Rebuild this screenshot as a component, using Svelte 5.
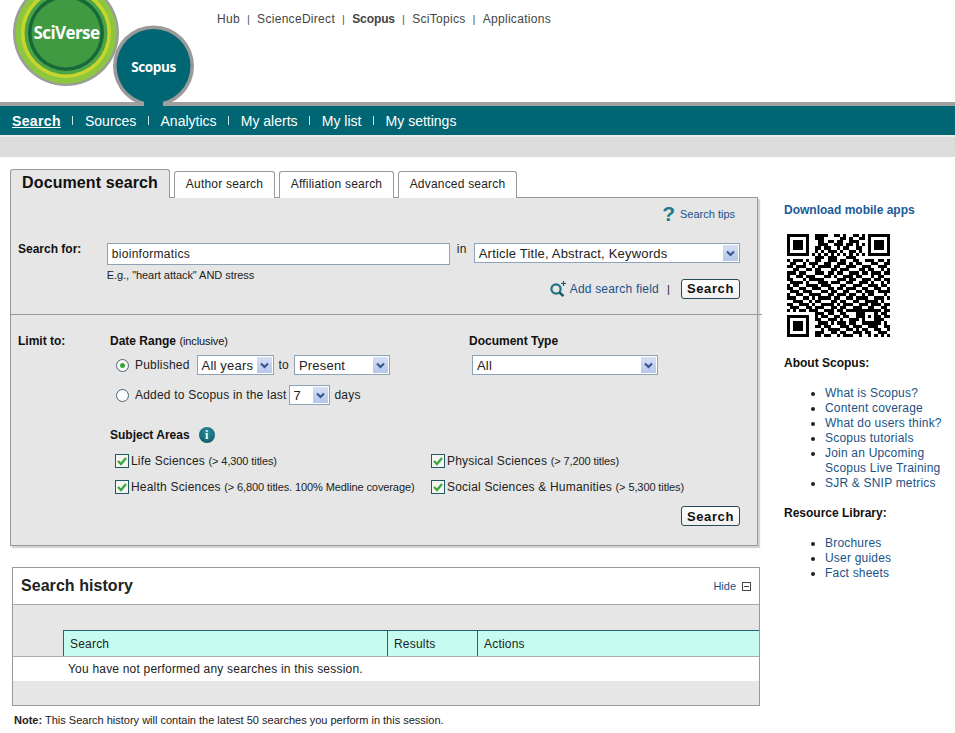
<script>
  const topLinks = ["Hub", "ScienceDirect", "Scopus", "SciTopics", "Applications"];
  const navLinks = ["Search", "Sources", "Analytics", "My alerts", "My list", "My settings"];
  const tabs = ["Author search", "Affiliation search", "Advanced search"];
  const aboutLinks = [
    "What is Scopus?",
    "Content coverage",
    "What do users think?",
    "Scopus tutorials",
    "Join an Upcoming Scopus Live Training",
    "SJR & SNIP metrics"
  ];
  const resourceLinks = ["Brochures", "User guides", "Fact sheets"];

  // QR code: finder and alignment squares are added by code below
  const qrRows = [
    "000000000111100110100110100000000",
    "000000000111000001101001100000000",
    "000000000011011011001110000000000",
    "000000000011100111011010100000000",
    "000000000110110010110011000000000",
    "000000000101011101001101000000000",
    "000000001010101010101010100000000",
    "000000000111011100011100000000000",
    "101110100110011101100110011101101",
    "011001011100110011101011000110011",
    "110111001011110110011100111001110",
    "001100110110001101110001101100101",
    "111011000111011011001110110111011",
    "100110111000110100111011000101100",
    "110001011111000011101100111011011",
    "011110100011101110011001110100101",
    "101100111101110001100111001110110",
    "110011001110011011011100110011001",
    "011101110001101100110011011101111",
    "100110011110011011101100101100010",
    "111001101011110110011011110011101",
    "001110010110001101100110011110100",
    "110011101001111010111001110111011",
    "011100110111001101100111001100110",
    "101011011100111011011111100111011",
    "000000000111011001100011101100110",
    "000000000101100110110011001011011",
    "000000000110011101001110011001100",
    "000000000011101011101100111011010",
    "000000000110110001110111001110011",
    "000000000001011110011010110011001",
    "000000000111001101100111011001110",
    "000000000110110010111001001010101"
  ];

  const inFinder = (x, y, ox, oy) => {
    const dx = x - ox;
    const dy = y - oy;
    if (dx < 0 || dy < 0 || dx > 6 || dy > 6) return false;
    return dx === 0 || dy === 0 || dx === 6 || dy === 6 || (dx > 1 && dx < 5 && dy > 1 && dy < 5);
  };

  const isDark = (x, y) => {
    if (x < 8 && y < 8) return inFinder(x, y, 0, 0);
    if (x > 24 && y < 8) return inFinder(x, y, 26, 0);
    if (x < 8 && y > 24) return inFinder(x, y, 0, 26);
    const ax = Math.abs(x - 26);
    const ay = Math.abs(y - 26);
    if (ax < 3 && ay < 3) return ax === 2 || ay === 2 || (ax === 0 && ay === 0);
    return qrRows[y][x] === "1";
  };

  const qrCells = [];
  for (let y = 0; y < 33; y++) {
    for (let x = 0; x < 33; x++) {
      if (isDark(x, y)) qrCells.push({ x, y });
    }
  }
</script>

{#snippet arrow()}
  <span class="arrow">
    <svg width="9" height="7" viewBox="0 0 9 7"><path d="M1 1.5l3.5 3.5 3.5-3.5" fill="none" stroke="#33538c" stroke-width="2" /></svg>
  </span>
{/snippet}

{#snippet check(label, note)}
  <div class="check">
    <svg class="box" width="14" height="14" viewBox="0 0 14 14">
      <rect x=".5" y=".5" width="13" height="13" fill="#f4f4f0" stroke="#1f5a6a" />
      <path d="M3 7l3 3 5-6" fill="none" stroke="#3aa63a" stroke-width="2.2" />
    </svg>
    <span>{label} <small>{note}</small></span>
  </div>
{/snippet}

<header class="top">
  <svg class="logo" width="200" height="106" viewBox="0 0 200 106">
    <circle cx="66" cy="33" r="53" fill="#9a9e98" />
    <circle cx="66" cy="33" r="50.5" fill="#8dc63f" />
    <circle cx="66" cy="33" r="45" fill="#c8d62b" />
    <circle cx="66" cy="33" r="41.5" fill="#4ba546" />
    <circle cx="66" cy="33" r="38" fill="#17693a" />
    <circle cx="66" cy="33" r="34.5" fill="#3f9a41" />
    <text x="66.5" y="38.5" class="logo-a" text-anchor="middle">SciVerse</text>
    <circle cx="153.5" cy="66" r="40.5" fill="#9a9a9a" />
    <path d="M138 102h9v4h-9zM160 102h9v4h-9z" fill="#a0a0a0" />
    <circle cx="153.5" cy="66" r="37" fill="#006674" />
    <rect x="144" y="98" width="19" height="8" fill="#006674" />
    <text x="153.5" y="71.5" class="logo-b" text-anchor="middle">Scopus</text>
  </svg>
  <nav class="toplinks">
    {#each topLinks as link, i}
      {#if i > 0}<i>|</i>{/if}
      <a href="#top" class:on={link === "Scopus"}>{link}</a>
    {/each}
  </nav>
</header>

<nav class="mainnav">
  {#each navLinks as link, i}
    {#if i > 0}<i></i>{/if}
    <a href="#nav" class:on={i === 0}>{link}</a>
  {/each}
</nav>
<div class="band"></div>

<main class="page">
  <section class="left">
    <div class="tabs">
      <div class="tab active">Document search</div>
      {#each tabs as tab}
        <div class="tab">{tab}</div>
      {/each}
    </div>

    <div class="panel">
      <div class="search-part">
        <div class="tips">
          <span class="qmark">?</span>
          <a href="#tips">Search tips</a>
        </div>
        <div class="search-row">
          <b class="lbl">Search for:</b>
          <div class="field">
            <input value="bioinformatics" />
            <p>E.g., "heart attack" AND stress</p>
          </div>
          <span class="in">in</span>
          <div class="select wide"><span>Article Title, Abstract, Keywords</span>{@render arrow()}</div>
        </div>
        <div class="add-row">
          <svg width="19" height="17" viewBox="0 0 19 17">
            <circle cx="7" cy="9" r="4.6" fill="none" stroke="#1f7280" stroke-width="2.2" />
            <path d="M10.5 12.5l4 3.6" stroke="#1f5a6a" stroke-width="2.6" />
            <path d="M14.5 1v5M12 3.5h5" stroke="#1f5a6a" stroke-width="1.2" />
          </svg>
          <a href="#add">Add search field</a>
          <span class="pipe">|</span>
          <button>Search</button>
        </div>
      </div>

      <div class="limit-part">
        <b class="lbl">Limit to:</b>
        <div class="limit-body">
          <div class="dates">
            <div class="date-col">
              <div class="head"><b>Date Range</b> <small>(inclusive)</small></div>
              <div class="radio-row first">
                <span class="radio on"></span>
                <span>Published</span>
                <div class="select years"><span>All years</span>{@render arrow()}</div>
                <span>to</span>
                <div class="select present"><span>Present</span>{@render arrow()}</div>
              </div>
              <div class="radio-row">
                <span class="radio"></span>
                <span>Added to Scopus in the last</span>
                <div class="select days"><span>7</span>{@render arrow()}</div>
                <span>days</span>
              </div>
            </div>
            <div class="type-col">
              <div class="head"><b>Document Type</b></div>
              <div class="select doctype"><span>All</span>{@render arrow()}</div>
            </div>
          </div>

          <div class="head subject"><b>Subject Areas</b><span class="info">i</span></div>
          <div class="areas">
            {@render check("Life Sciences", "(> 4,300 titles)")}
            {@render check("Physical Sciences", "(> 7,200 titles)")}
            {@render check("Health Sciences", "(> 6,800 titles. 100% Medline coverage)")}
            {@render check("Social Sciences & Humanities", "(> 5,300 titles)")}
          </div>
          <div class="bottom-btn"><button>Search</button></div>
        </div>
      </div>
    </div>

    <div class="history">
      <div class="hist-head">
        <h2>Search history</h2>
        <a href="#hide">Hide</a>
        <span class="minus"></span>
      </div>
      <div class="hist-gap">
        <div class="thead">
          <span class="c1">Search</span>
          <span class="c2">Results</span>
          <span class="c3">Actions</span>
        </div>
      </div>
      <div class="hist-row">You have not performed any searches in this session.</div>
      <div class="hist-foot"></div>
    </div>
    <p class="note"><b>Note:</b> This Search history will contain the latest 50 searches you perform in this session.</p>
  </section>

  <aside class="side">
    <a class="dl" href="#apps">Download mobile apps</a>
    <svg class="qr" width="103" height="103" viewBox="0 0 33 33" shape-rendering="crispEdges">
      {#each qrCells as c}
        <rect x={c.x} y={c.y} width="1" height="1" fill="#000" />
      {/each}
    </svg>
    <b class="side-title">About Scopus:</b>
    <ul>
      {#each aboutLinks as link}
        <li><a href="#about">{link}</a></li>
      {/each}
    </ul>
    <b class="side-title">Resource Library:</b>
    <ul>
      {#each resourceLinks as link}
        <li><a href="#res">{link}</a></li>
      {/each}
    </ul>
  </aside>
</main>

<style>
  :global(body) {
    margin: 0;
    background: #fff;
    color: #222;
    font-family: "Liberation Sans", Arial, sans-serif;
    font-size: 12px;
    letter-spacing: 0.2px;
    overflow: hidden;
  }

  a {
    color: #1a5286;
    text-decoration: none;
  }

  p {
    margin: 0;
  }

  small {
    font-size: 11px;
    letter-spacing: -0.1px;
  }

  /* header */
  .top {
    position: relative;
    height: 102px;
    border-bottom: 4px solid #a0a0a0;
  }

  .logo {
    position: absolute;
    left: 0;
    top: 0;
  }

  .logo-a {
    fill: #fff;
    font: bold 17px "Open Sans", sans-serif;
    letter-spacing: -0.6px;
  }

  .logo-b {
    fill: #fff;
    font: bold 13.5px "Open Sans", sans-serif;
    letter-spacing: -0.4px;
  }

  .toplinks {
    display: flex;
    padding: 12px 0 0 217px;
    gap: 7px;
    line-height: 14px;
    letter-spacing: 0.3px;
  }

  .toplinks a {
    color: #444;
  }

  .toplinks a.on {
    font-weight: bold;
    letter-spacing: -0.1px;
  }

  .toplinks i {
    font-style: normal;
    color: #555;
    font-size: 11px;
  }

  .mainnav {
    display: flex;
    align-items: center;
    height: 29px;
    padding-left: 12px;
    background: #006674;
    font-size: 14px;
    letter-spacing: 0;
  }

  .mainnav a {
    color: #fff;
  }

  .mainnav a.on {
    font-weight: bold;
    text-decoration: underline;
    letter-spacing: 0.35px;
  }

  .mainnav i {
    width: 1px;
    height: 9px;
    margin: 0 11.6px;
    background: #cfe3e6;
  }

  .band {
    height: 20px;
    border-top: 2px solid #e8ecec;
    background: #dcdcdc;
  }

  /* page columns */
  .page {
    display: flex;
    padding: 13px 0 0 10px;
  }

  .left {
    width: 750px;
    flex: none;
  }

  .tabs {
    display: flex;
    gap: 4px;
    align-items: flex-end;
    height: 28px;
    position: relative;
    z-index: 1;
    margin-bottom: -1px;
  }

  .tab {
    display: flex;
    align-items: center;
    justify-content: center;
    height: 27px;
    padding-bottom: 2px;
    box-sizing: border-box;
    border: 1px solid #999;
    border-bottom: 0;
    border-radius: 3px 3px 0 0;
    background: #fff;
    color: #222;
    white-space: nowrap;
  }

  .tab.active {
    height: 29px;
    width: 160px;
    background: #e6e6e6;
    font-size: 16px;
    font-weight: bold;
    letter-spacing: 0.1px;
    color: #111;
  }

  .tab:nth-child(2) {
    width: 101px;
  }

  .tab:nth-child(3) {
    width: 115px;
  }

  .tab:nth-child(4) {
    width: 119px;
  }

  .panel {
    width: 748px;
    box-sizing: border-box;
    border: 1px solid #999;
    background: #e6e6e6;
    box-shadow: 2px 2px 1px #d4d4d4;
  }

  .search-part {
    height: 117px;
    box-sizing: border-box;
    padding: 7px 22px 0 7px;
    border-bottom: 1px solid #999;
    margin-right: -5px;
  }

  .tips {
    display: flex;
    justify-content: flex-end;
    align-items: center;
    height: 18px;
    gap: 5px;
    padding-right: 5px;
    font-size: 11px;
    letter-spacing: 0;
  }

  .qmark {
    color: #1f7a88;
    font-size: 21px;
    font-weight: bold;
    line-height: 18px;
  }

  .search-row {
    display: flex;
    align-items: flex-start;
    margin-top: 20px;
  }

  .lbl {
    display: block;
    color: #111;
    letter-spacing: 0;
  }

  .search-row .lbl {
    width: 89px;
    line-height: 14px;
    margin-top: -1px;
  }

  .field {
    width: 344px;
  }

  input {
    display: block;
    width: 100%;
    height: 22px;
    box-sizing: border-box;
    padding: 0 4px;
    border: 1px solid #8fa3b3;
    background: #fff;
    color: #222;
    font: 12px "Liberation Sans", Arial, sans-serif;
    letter-spacing: 0.3px;
  }

  .field p {
    font-size: 11px;
    letter-spacing: -0.05px;
    line-height: 14px;
    margin-top: 3px;
  }

  .in {
    width: 24px;
    padding-left: 7px;
    box-sizing: border-box;
    line-height: 12px;
  }

  .select {
    display: flex;
    align-items: center;
    justify-content: space-between;
    height: 20px;
    box-sizing: border-box;
    padding: 0 1px 0 4px;
    border: 1px solid #8ca3b8;
    background: #fff;
    color: #222;
    font-size: 13px;
    letter-spacing: 0.2px;
  }

  .arrow {
    display: flex;
    align-items: center;
    justify-content: center;
    width: 15px;
    height: 16px;
    background: linear-gradient(#d6e0f5, #b4c6ea);
  }

  .wide {
    width: 267px;
  }

  .add-row {
    display: flex;
    align-items: center;
    justify-content: flex-end;
    margin: -4px 0 0;
    height: 21px;
  }

  .add-row svg {
    margin-right: 2px;
  }

  .pipe {
    margin: 0 11px 0 8px;
    color: #222;
    font-size: 11px;
  }

  button {
    width: 59px;
    height: 20px;
    padding: 0;
    box-sizing: border-box;
    border: 1px solid #274a5a;
    border-radius: 3px;
    background: linear-gradient(#fff, #f0f0ee);
    color: #111;
    font: bold 13px "Liberation Sans", Arial, sans-serif;
    letter-spacing: 0.6px;
  }

  .limit-part {
    display: flex;
    padding: 19px 17px 0 7px;
    height: 230px;
    box-sizing: border-box;
  }

  .limit-part > .lbl {
    width: 92px;
    line-height: 14px;
  }

  .limit-body {
    flex: 1;
  }

  .head {
    line-height: 14px;
    letter-spacing: 0;
    color: #111;
  }

  .dates {
    display: flex;
  }

  .date-col {
    width: 359px;
  }

  .radio-row {
    display: flex;
    align-items: center;
    gap: 5px;
    margin: 10px 0 0 6px;
    height: 20px;
  }

  .radio-row.first {
    margin-top: 7px;
  }

  .radio {
    position: relative;
    width: 11px;
    height: 11px;
    margin-right: 1px;
    border: 1px solid #4b6478;
    border-radius: 50%;
    background: #fbfbfb;
  }

  .radio.on::after {
    content: "";
    position: absolute;
    left: 3px;
    top: 3px;
    width: 5px;
    height: 5px;
    border-radius: 50%;
    background: #3aa63a;
  }

  .years {
    width: 77px;
    margin-left: 2px;
  }

  .present {
    width: 96px;
  }

  .days {
    width: 41px;
    margin-left: -3px;
  }

  .type-col .doctype {
    width: 186px;
    margin: 7px 0 0 3px;
  }

  .subject {
    display: flex;
    align-items: center;
    gap: 9px;
    margin-top: 22px;
  }

  .info {
    display: flex;
    align-items: center;
    justify-content: center;
    width: 16px;
    height: 16px;
    border-radius: 50%;
    background: radial-gradient(circle at 50% 30%, #2a8c99, #0a5563);
    color: #fff;
    font: bold 12px "Liberation Serif", serif;
  }

  .areas {
    display: grid;
    grid-template-columns: 316px 1fr;
    row-gap: 12px;
    margin: 11px 0 0 5px;
  }

  .check {
    display: flex;
    align-items: center;
    gap: 2px;
    height: 14px;
    white-space: nowrap;
  }

  .box {
    flex: none;
  }

  .bottom-btn {
    display: flex;
    justify-content: flex-end;
    margin: 12px 0 0;
  }

  /* history */
  .history {
    width: 748px;
    margin: 21px 0 0 2px;
    box-sizing: border-box;
    border: 1px solid #999;
    background: #e6e6e6;
  }

  .hist-head {
    display: flex;
    align-items: center;
    height: 36px;
    padding: 0 8px;
    background: #fff;
    border-bottom: 1px solid #aaa;
  }

  h2 {
    flex: 1;
    margin: 0;
    color: #222;
    font-size: 16px;
    font-weight: bold;
    letter-spacing: 0.05px;
  }

  .hist-head a {
    font-size: 11px;
    letter-spacing: 0;
  }

  .minus {
    position: relative;
    width: 7px;
    height: 7px;
    margin-left: 6px;
    border: 1px solid #444;
  }

  .minus::after {
    content: "";
    position: absolute;
    left: 1px;
    right: 1px;
    top: 3px;
    height: 1px;
    background: #444;
  }

  .hist-gap {
    padding: 25px 0 0 50px;
    border-bottom: 1px solid #aaa;
  }

  .thead {
    display: flex;
    height: 25px;
    line-height: 26px;
    border-top: 1px solid #1f6670;
    background: #c6fbf0;
  }

  .thead span {
    box-sizing: border-box;
    padding-left: 6px;
    border-left: 1px solid #1f6670;
  }

  .c1 {
    width: 324px;
  }

  .c2 {
    width: 90px;
  }

  .c3 {
    flex: 1;
  }

  .hist-row {
    height: 24px;
    line-height: 24px;
    padding-left: 55px;
    background: #fff;
  }

  .hist-foot {
    height: 24px;
  }

  .note {
    margin: 7px 0 0 4px;
    font-size: 11px;
    letter-spacing: 0;
    line-height: 14px;
  }

  /* right column */
  .side {
    width: 170px;
    margin-left: 24px;
    padding-top: 33px;
  }

  .dl {
    display: block;
    font-weight: bold;
    line-height: 14px;
    letter-spacing: 0;
    color: #1a5a96;
  }

  .qr {
    display: block;
    margin: 17px 0 0 3px;
  }

  .side-title {
    display: block;
    line-height: 14px;
    letter-spacing: 0;
    color: #111;
  }

  .qr + .side-title {
    margin-top: 19px;
  }

  ul {
    margin: 16px 0 15px;
    padding: 0 0 0 41px;
  }

  li {
    line-height: 15px;
  }
</style>
